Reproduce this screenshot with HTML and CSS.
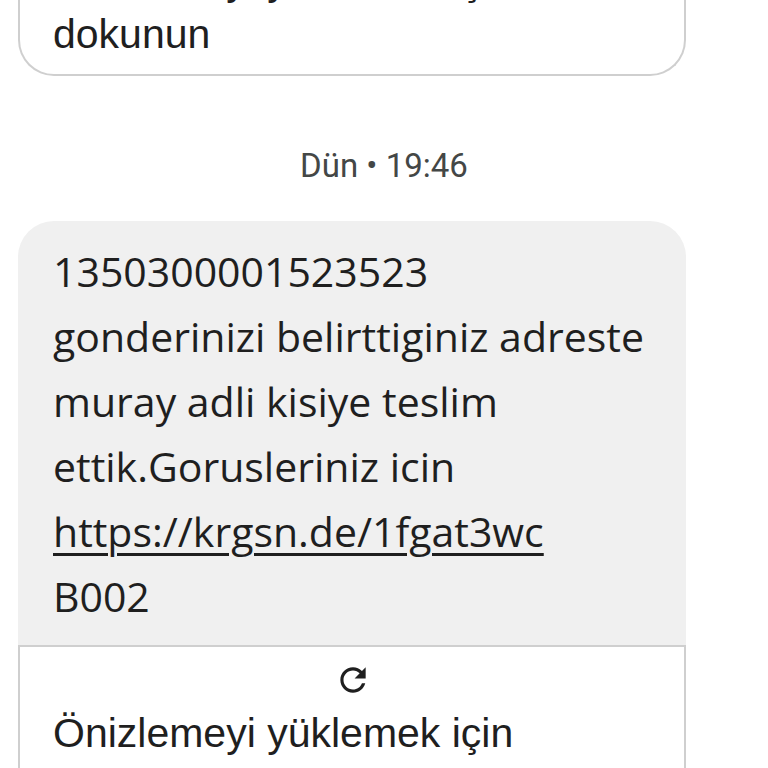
FILE: index.html
```html
<!DOCTYPE html>
<html lang="tr">
    <head>
        <meta charset="UTF-8">
        <meta name="viewport" content="width=device-width, initial-scale=1.0">
        <title>Mesajlar</title>
        <link rel="stylesheet" href="styles.css">
    </head>
    <body>
        <div class="thread">

            <!-- Önceki önizleme kartı (üstü ekran dışında) -->
            <div class="preview-card top-card">
                <p class="preview-text">Önizlemeyi yüklemek için<br>dokunun</p>
            </div>

            <!-- Zaman damgası -->
            <div class="timestamp">Dün • 19:46</div>

            <!-- Gelen mesaj -->
            <div class="message">
                <div class="bubble">
                    <p>1350300001523523<br>
                    gonderinizi belirttiginiz adreste<br>
                    muray adli kisiye teslim<br>
                    ettik.Gorusleriniz icin<br>
                    <a href="#" class="link">https://krgsn.de/1fgat3wc</a><br>
                    B002</p>
                </div>
                <div class="preview-card bottom-card">
                    <svg class="refresh" viewBox="0 0 24 24" width="38" height="38">
                        <path d="M17.65 6.35C16.2 4.9 14.21 4 12 4c-4.42 0-7.990 3.58-7.99 8s3.57 8 7.99 8c3.73 0 6.84-2.55 7.73-6h-2.08c-.82 2.33-3.04 4-5.65 4-3.31 0-6-2.69-6-6s2.69-6 6-6c1.66 0 3.14.69 4.22 1.78L13 11h7V4l-2.35 2.35z" fill="#1f1f1f"/>
                    </svg>
                    <p class="preview-text">Önizlemeyi yüklemek için<br>dokunun</p>
                </div>
            </div>

        </div>
    </body>
</html>
```

FILE: styles.css
```css
body {
    margin: 0;
    background-color: #fff;
    overflow: hidden;
    height: 768px;
}

.thread {
    width: 668px;
    margin-left: 18px;
    margin-top: -45px;
    display: flex;
    flex-direction: column;
}

.preview-card {
    background-color: #fff;
    border: 2px solid #cfcfcf;
}

.top-card {
    border-top: none;
    border-radius: 0 0 36px 36px;
    padding: 0 0 13px 33px;
}

.preview-text {
    margin: 0;
    font-family: "Liberation Sans", Arial, sans-serif;
    font-size: 41px;
    line-height: 53px;
    color: #1f1f1f;
}

.timestamp {
    margin-top: 70px;
    margin-left: -18px;
    width: 768px;
    text-align: center;
    font-family: Roboto, sans-serif;
    font-size: 33px;
    color: #444746;
}

.message {
    margin-top: 36px;
}

.bubble {
    background-color: #f0f0f0;
    border-radius: 36px 36px 0 0;
    padding: 18px 33px 16px 35px;
}

.bubble p {
    margin: 0;
    font-family: "Open Sans", sans-serif;
    font-size: 41px;
    line-height: 65px;
    color: #1f1f1f;
}

.link {
    color: #1f1f1f;
    text-decoration: underline;
    text-decoration-thickness: 3px;
    text-underline-offset: 6px;
}

.bottom-card {
    border-bottom: none;
    padding: 14px 0 0 33px;
}

.refresh {
    display: block;
    margin: 0 0 8px 281px;
}
```
